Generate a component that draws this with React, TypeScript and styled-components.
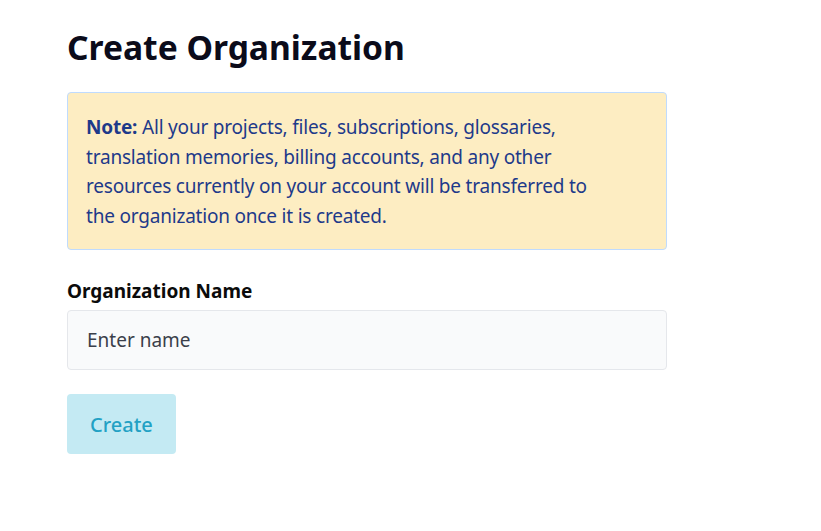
import React from 'react';
import styled, { createGlobalStyle } from 'styled-components';

const GlobalStyle = createGlobalStyle`
    body {
        margin: 0;
        background: #ffffff;
        font-family: "Noto Sans", "Open Sans", sans-serif;
    }
`;

const Page = styled.div`
    width: 600px;
    padding: 24px 0 0 67px;
`;

const Title = styled.h1`
    margin: 0 0 22px;
    font-size: 33.6px;
    line-height: 46px;
    font-weight: 700;
    color: #0b0b1a;
`;

const Note = styled.div`
    box-sizing: border-box;
    background: #fdedc2;
    border: 1px solid #bfdbfe;
    border-radius: 4px;
    padding: 20px 60px 18px 18px;
    font-size: 19px;
    letter-spacing: -0.2px;
    line-height: 29.5px;
    color: #1e3a8a;

    strong {
        font-weight: 700;
    }
`;

const Field = styled.div`
    display: flex;
    flex-direction: column;
    gap: 6px;
    margin-top: 28px;
`;

const Label = styled.label`
    font-size: 19px;
    line-height: 26px;
    font-weight: 700;
    color: #0b0b0b;
`;

const Input = styled.input`
    box-sizing: border-box;
    height: 60px;
    width: 100%;
    padding: 0 19px;
    border: 1px solid #e5e7eb;
    border-radius: 4px;
    background: #f9fafb;
    font-family: inherit;
    font-size: 19px;
    color: #374151;
    outline: none;

    &::placeholder {
        color: #3b3f4a;
    }
`;

const Button = styled.button`
    margin-top: 24px;
    height: 60px;
    padding: 0 23px;
    border: none;
    border-radius: 4px;
    background: #c4eaf3;
    color: #22a1c4;
    font-family: inherit;
    font-size: 20px;
    font-weight: 500;
    cursor: pointer;
`;

const App = () => {
    return (<>
        <GlobalStyle />
        <Page>
            <Title>Create Organization</Title>
            <Note>
                <strong>Note:</strong> All your projects, files, subscriptions, glossaries, translation memories, billing accounts, and any other resources currently on your account will be transferred to the organization once it is created.
            </Note>
            <Field>
                <Label htmlFor="org-name">Organization Name</Label>
                <Input id="org-name" placeholder="Enter name" />
            </Field>
            <Button>Create</Button>
        </Page>
    </>);
}

export default App;
